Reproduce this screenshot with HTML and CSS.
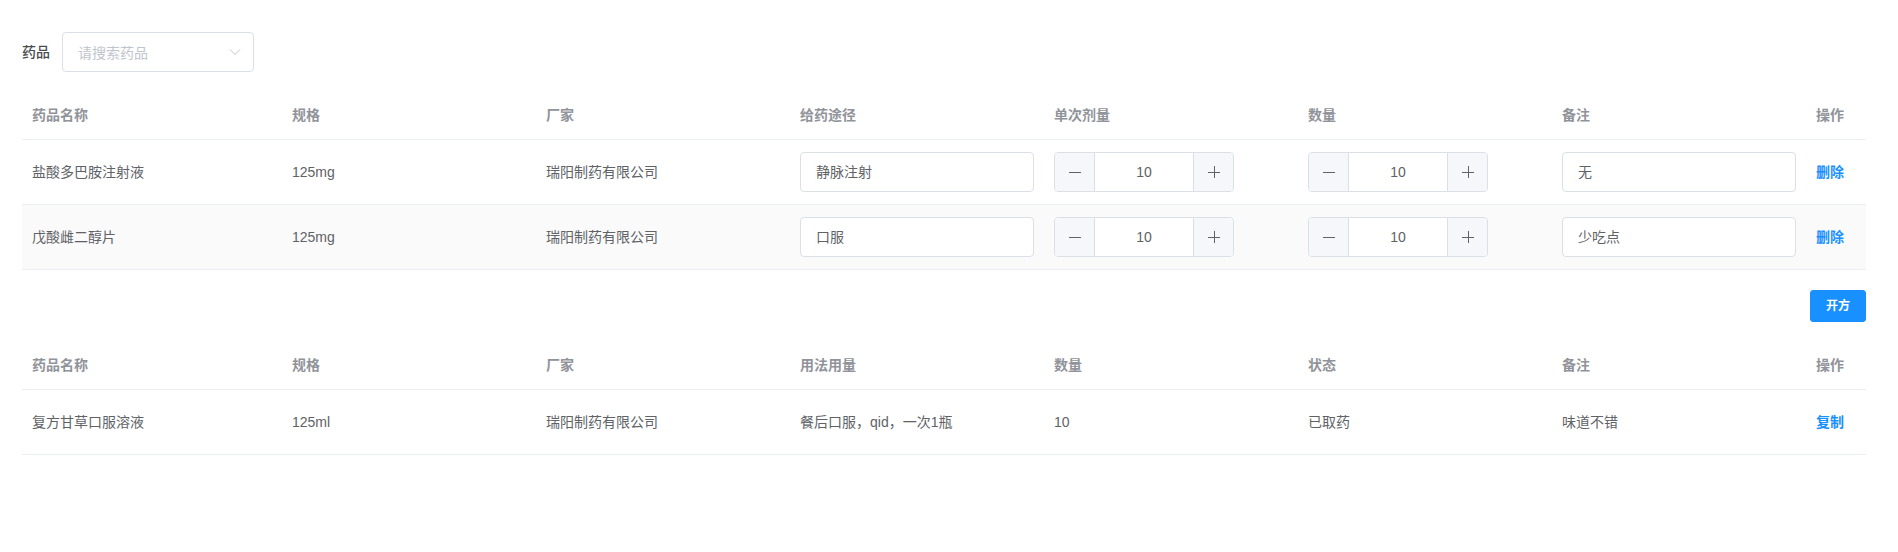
FILE: index.html
```html
<!DOCTYPE html>
<html lang="zh-CN">
<head>
<meta charset="utf-8">
<title>开方</title>
<link rel="stylesheet" href="styles.css">
</head>
<body>
<div class="page">
  <form class="search">
    <label class="form-label">药品</label>
    <div class="select">
      <span class="placeholder">请搜索药品</span>
      <svg class="arrow" width="12" height="8" viewBox="0 0 12 8"><path d="M1 1.5 L6 6.5 L11 1.5" fill="none" stroke="#C0C4CC" stroke-width="1"/></svg>
    </div>
  </form>

  <div class="table">
    <div class="tr thead">
      <div class="cell">药品名称</div>
      <div class="cell">规格</div>
      <div class="cell">厂家</div>
      <div class="cell">给药途径</div>
      <div class="cell">单次剂量</div>
      <div class="cell">数量</div>
      <div class="cell">备注</div>
      <div class="cell">操作</div>
    </div>
    <div class="tr trow">
      <div class="cell">盐酸多巴胺注射液</div>
      <div class="cell">125mg</div>
      <div class="cell">瑞阳制药有限公司</div>
      <div class="cell"><div class="input">静脉注射</div></div>
      <div class="cell">
        <div class="num">
          <span class="num-btn dec"><svg width="14" height="14" viewBox="0 0 14 14"><path d="M1 7.5 H13" stroke="#606266" stroke-width="1"/></svg></span>
          <span class="num-val">10</span>
          <span class="num-btn inc"><svg width="14" height="14" viewBox="0 0 14 14"><path d="M1 7.5 H13 M7.5 1 V13" stroke="#606266" stroke-width="1"/></svg></span>
        </div>
      </div>
      <div class="cell">
        <div class="num">
          <span class="num-btn dec"><svg width="14" height="14" viewBox="0 0 14 14"><path d="M1 7.5 H13" stroke="#606266" stroke-width="1"/></svg></span>
          <span class="num-val">10</span>
          <span class="num-btn inc"><svg width="14" height="14" viewBox="0 0 14 14"><path d="M1 7.5 H13 M7.5 1 V13" stroke="#606266" stroke-width="1"/></svg></span>
        </div>
      </div>
      <div class="cell"><div class="input">无</div></div>
      <div class="cell"><span class="link">删除</span></div>
    </div>
    <div class="tr trow striped">
      <div class="cell">戊酸雌二醇片</div>
      <div class="cell">125mg</div>
      <div class="cell">瑞阳制药有限公司</div>
      <div class="cell"><div class="input">口服</div></div>
      <div class="cell">
        <div class="num">
          <span class="num-btn dec"><svg width="14" height="14" viewBox="0 0 14 14"><path d="M1 7.5 H13" stroke="#606266" stroke-width="1"/></svg></span>
          <span class="num-val">10</span>
          <span class="num-btn inc"><svg width="14" height="14" viewBox="0 0 14 14"><path d="M1 7.5 H13 M7.5 1 V13" stroke="#606266" stroke-width="1"/></svg></span>
        </div>
      </div>
      <div class="cell">
        <div class="num">
          <span class="num-btn dec"><svg width="14" height="14" viewBox="0 0 14 14"><path d="M1 7.5 H13" stroke="#606266" stroke-width="1"/></svg></span>
          <span class="num-val">10</span>
          <span class="num-btn inc"><svg width="14" height="14" viewBox="0 0 14 14"><path d="M1 7.5 H13 M7.5 1 V13" stroke="#606266" stroke-width="1"/></svg></span>
        </div>
      </div>
      <div class="cell"><div class="input">少吃点</div></div>
      <div class="cell"><span class="link">删除</span></div>
    </div>
  </div>

  <div class="actions">
    <button class="btn-primary" type="button">开方</button>
  </div>

  <div class="table">
    <div class="tr thead">
      <div class="cell">药品名称</div>
      <div class="cell">规格</div>
      <div class="cell">厂家</div>
      <div class="cell">用法用量</div>
      <div class="cell">数量</div>
      <div class="cell">状态</div>
      <div class="cell">备注</div>
      <div class="cell">操作</div>
    </div>
    <div class="tr trow plain">
      <div class="cell">复方甘草口服溶液</div>
      <div class="cell">125ml</div>
      <div class="cell">瑞阳制药有限公司</div>
      <div class="cell">餐后口服，qid，一次1瓶</div>
      <div class="cell">10</div>
      <div class="cell">已取药</div>
      <div class="cell">味道不错</div>
      <div class="cell"><span class="link">复制</span></div>
    </div>
  </div>
</div>
</body>
</html>
```

FILE: styles.css
```css
* { box-sizing: border-box; }

html, body {
  margin: 0;
  padding: 0;
  background: #ffffff;
}

body {
  font-family: "Liberation Sans", "Noto Sans CJK SC", sans-serif;
  font-size: 14px;
  color: #606266;
}

.page {
  padding: 32px 32px 0 22px;
}

.search {
  display: flex;
  align-items: center;
  height: 40px;
  margin: 0 0 20px 0;
}

.form-label {
  width: 40px;
  padding-right: 12px;
  font-weight: 500;
  color: #4a4c50;
  line-height: 40px;
  white-space: nowrap;
}

.select {
  width: 192px;
  height: 40px;
  border: 1px solid #DCDFE6;
  border-radius: 4px;
  display: flex;
  align-items: center;
  justify-content: space-between;
  padding: 0 10px 0 15px;
}

.placeholder {
  color: #C0C4CC;
}

.arrow {
  display: block;
  margin-right: 2px;
}

.table {
  width: 100%;
}

.tr {
  display: grid;
  grid-template-columns: 260px repeat(6, 1fr) 60px;
  border-bottom: 1px solid #EBEEF5;
}

.cell {
  padding: 12px 10px;
  line-height: 23px;
  display: flex;
  align-items: center;
  white-space: nowrap;
  min-width: 0;
}

.thead .cell {
  color: #909399;
  font-weight: 700;
}

.trow {
  min-height: 65px;
}

.striped {
  background: #FAFAFA;
}

.input {
  width: 100%;
  height: 40px;
  line-height: 38px;
  border: 1px solid #DCDFE6;
  border-radius: 4px;
  background: #ffffff;
  padding: 0 15px;
  color: #606266;
}

.num {
  width: 180px;
  height: 40px;
  border: 1px solid #DCDFE6;
  border-radius: 4px;
  background: #ffffff;
  display: flex;
  overflow: hidden;
}

.num-btn {
  width: 40px;
  flex: 0 0 40px;
  background: #F5F7FA;
  display: flex;
  align-items: center;
  justify-content: center;
}

.num-btn svg {
  display: block;
}

.dec {
  border-right: 1px solid #DCDFE6;
}

.inc {
  border-left: 1px solid #DCDFE6;
}

.num-val {
  flex: 1;
  text-align: center;
  line-height: 38px;
  color: #606266;
}

.link {
  color: #1890ff;
  font-weight: 700;
}

.actions {
  display: flex;
  justify-content: flex-end;
  margin: 20px 0 20px 0;
}

.btn-primary {
  font-family: "Liberation Sans", "Noto Sans CJK SC", sans-serif;
  font-size: 12px;
  font-weight: 700;
  color: #ffffff;
  background: #1890ff;
  border: 1px solid #1890ff;
  border-radius: 3px;
  height: 32px;
  padding: 0 15px;
  line-height: 30px;
  cursor: pointer;
}
```
